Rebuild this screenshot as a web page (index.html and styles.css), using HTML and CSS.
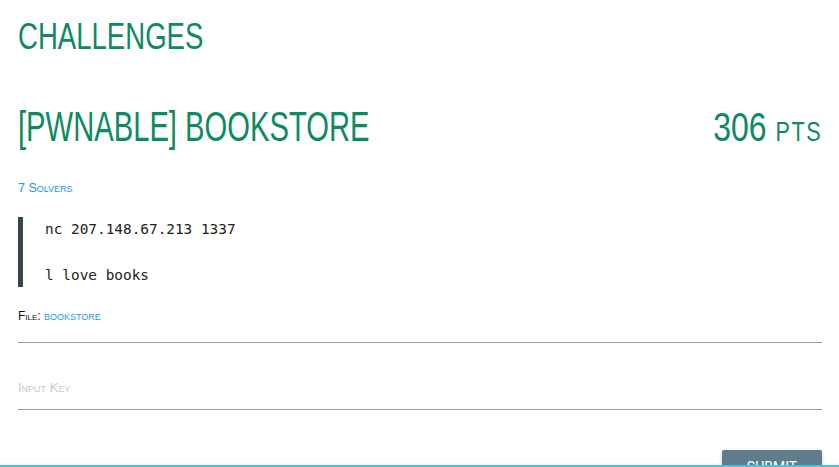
FILE: index.html
```html
<!DOCTYPE html>
<html>
<head>
<meta charset="utf-8">
<link rel="stylesheet" href="styles.css">
</head>
<body>
<div class="page">
  <h1 class="page-title"><span class="narrow narrow-a">CHALLENGES</span></h1>
  <div class="chal-head">
    <h2 class="chal-name"><span class="narrow narrow-b">[PWNABLE] BOOKSTORE</span></h2>
    <div class="chal-pts"><span class="narrow narrow-c">306 <span class="pts-unit">PTS</span></span></div>
  </div>
  <div class="solvers">7 Solvers</div>
  <blockquote class="desc">
    <p>nc 207.148.67.213 1337</p>
    <p>l love books</p>
  </blockquote>
  <div class="file-row">File: <a class="file-link">bookstore</a></div>
  <div class="field"></div>
  <div class="field key-field"><span class="placeholder">Input Key</span></div>
  <div class="actions"><button class="submit">SUBMIT</button></div>
</div>
<div class="footer-bar"></div>
</body>
</html>
```
FILE: styles.css
```css
html, body { margin: 0; padding: 0; background: #fff; overflow: hidden; height: 467px; }
body { font-family: "Liberation Sans", sans-serif; }
.page { padding: 0 17px 0 18px; }
.narrow { display: inline-block; white-space: nowrap; transform-origin: left center; }
.narrow-a { transform: scaleX(0.745); }
.narrow-b { transform: scaleX(0.695); }
.narrow-c { transform: scaleX(0.80); transform-origin: right center; }
.page-title {
  margin: 0; padding-top: 17px;
  font-size: 37px; font-weight: normal; color: #0e8a5f; line-height: 40px;
}
.chal-head { display: flex; justify-content: space-between; align-items: baseline; margin-top: 46px; }
.chal-name { margin: 0; font-size: 42px; font-weight: normal; color: #0e8a5f; line-height: 48px; }
.chal-pts { font-size: 40px; color: #0e8a5f; line-height: 48px; }
.pts-unit { font-size: 27px; letter-spacing: 2px; }
.solvers { margin-top: 24px; font-size: 12.5px; color: #2196f3; font-variant: small-caps; line-height: 16px; }
.desc { margin: 21px 0 0 0; border-left: 5px solid #37474f; padding: 1px 0 1px 22px; }
.desc p { margin: 0; font-family: "DejaVu Sans Mono", monospace; font-size: 14.4px; line-height: 22px; color: #222; }
.desc p + p { margin-top: 24px; }
.file-row { margin-top: 21px; font-size: 12px; color: #111; font-variant: small-caps; line-height: 16px; height: 16px; }
.file-link { color: #2196f3; font-size: 13px; line-height: 1; }
.field { height: 18px; border-bottom: 1px solid #9e9e9e; }
.key-field { display: flex; align-items: flex-end; padding-bottom: 14px; box-sizing: border-box; height: 67px; }
.placeholder { font-size: 13px; color: #c8c8c8; font-variant: small-caps; }
.actions { display: flex; justify-content: flex-end; margin-top: 40px; }
.submit {
  width: 100px; height: 36px; border: none; border-radius: 2px; background: #607d8b; color: #fff;
  font-family: "Roboto", sans-serif; font-size: 14px; padding-bottom: 4px;
  box-shadow: 0 2px 4px rgba(0,0,0,0.2);
}
.footer-bar { position: fixed; left: 0; right: 0; bottom: 0; height: 2px; background: #4fc1d6; }
```
